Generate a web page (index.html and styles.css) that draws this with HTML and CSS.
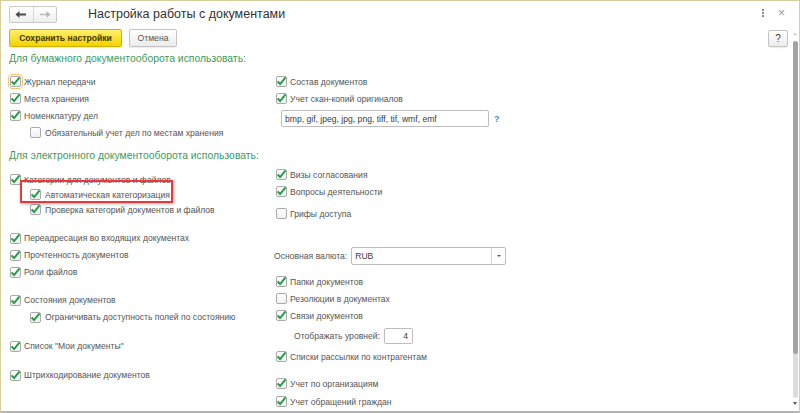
FILE: index.html
```html
<!DOCTYPE html>
<html lang="ru">
<head>
<meta charset="utf-8">
<title>Настройка работы с документами</title>
<link rel="stylesheet" href="styles.css">
</head>
<body>
<div class="window">
  <header class="titlebar">
    <div class="nav">
      <button class="nav-btn back" type="button">
        <svg width="12" height="9" viewBox="0 0 12 9"><path d="M11 4.5H3" stroke="#4a4a4a" stroke-width="2"/><path d="M0.5 4.5L4.5 1V8Z" fill="#4a4a4a"/></svg>
      </button>
      <button class="nav-btn fwd" type="button">
        <svg width="12" height="9" viewBox="0 0 12 9"><path d="M1 4.5H8.5" stroke="#b5b5b5" stroke-width="1.4"/><path d="M11.5 4.5L7.5 1.3V7.7Z" fill="#b5b5b5"/></svg>
      </button>
    </div>
    <h1 class="title">Настройка работы с документами</h1>
    <div class="win-icons">
      <span class="more"><i></i><i></i><i></i></span>
      <span class="close">×</span>
    </div>
  </header>
  <div class="body">
    <div class="main">
      <div class="toolbar">
        <button class="btn btn-primary" type="button">Сохранить настройки</button>
        <button class="btn" type="button">Отмена</button>
        <button class="btn btn-help" type="button">?</button>
      </div>
      <div class="content">
        <h2 class="section-title">Для бумажного документооборота использовать:</h2>
        <div class="cols">
          <div class="col">
            <label class="row mt-7"><span class="cb on focus"></span>Журнал передачи</label>
            <label class="row"><span class="cb on"></span>Места хранения</label>
            <label class="row"><span class="cb on"></span>Номенклатуру дел</label>
            <label class="row sub"><span class="cb"></span>Обязательный учет дел по местам хранения</label>
          </div>
          <div class="col">
            <label class="row mt-7"><span class="cb on"></span>Состав документов</label>
            <label class="row"><span class="cb on"></span>Учет скан-копий оригиналов</label>
            <div class="field-row mt-3">
              <div class="text-input wide">bmp, gif, jpeg, jpg, png, tiff, tif, wmf, emf</div>
              <span class="hint">?</span>
            </div>
          </div>
        </div>

        <h2 class="section-title mt-8">Для электронного документооборота использовать:</h2>
        <div class="cols">
          <div class="col">
            <div class="group mt-9">
              <label class="row short"><span class="cb on"></span>Категории для документов и файлов</label>
              <label class="row short sub"><span class="cb on"></span>Автоматическая категоризация</label>
              <label class="row short sub"><span class="cb on"></span>Проверка категорий документов и файлов</label>
              <div class="annotation"></div>
            </div>
            <label class="row mt-13"><span class="cb on"></span>Переадресация во входящих документах</label>
            <label class="row"><span class="cb on"></span>Прочтенность документов</label>
            <label class="row"><span class="cb on"></span>Роли файлов</label>
            <label class="row mt-11"><span class="cb on"></span>Состояния документов</label>
            <label class="row sub"><span class="cb on"></span>Ограничивать доступность полей по состоянию</label>
            <label class="row mt-12"><span class="cb on"></span>Список "Мои документы"</label>
            <label class="row mt-12"><span class="cb on"></span>Штрихкодирование документов</label>
          </div>
          <div class="col">
            <label class="row mt-3"><span class="cb on"></span>Визы согласования</label>
            <label class="row"><span class="cb on"></span>Вопросы деятельности</label>
            <label class="row mt-5"><span class="cb"></span>Грифы доступа</label>
            <div class="field-row currency mt-25">
              <span class="field-label">Основная валюта:</span>
              <div class="select"><span class="select-value">RUB</span><span class="select-btn"></span></div>
            </div>
            <label class="row mt-8"><span class="cb on"></span>Папки документов</label>
            <label class="row"><span class="cb"></span>Резолюции в документах</label>
            <label class="row"><span class="cb on"></span>Связи документов</label>
            <div class="field-row levels mt-4">
              <span class="field-label">Отображать уровней:</span>
              <div class="text-input num">4</div>
            </div>
            <label class="row mt-4"><span class="cb on"></span>Списки рассылки по контрагентам</label>
            <label class="row mt-10"><span class="cb on"></span>Учет по организациям</label>
            <label class="row mt-1"><span class="cb on"></span>Учет обращений граждан</label>
          </div>
        </div>
      </div>
    </div>
    <div class="scrollbar">
      <span class="sb-up"></span>
      <div class="sb-track"><div class="sb-thumb"></div></div>
      <span class="sb-down"></span>
    </div>
  </div>
</div>
</body>
</html>
```

FILE: styles.css
```css
* { box-sizing: border-box; }
html, body { margin: 0; padding: 0; background: #fff; }
body {
  font-family: "Liberation Sans", Arial, sans-serif;
  font-size: 8.6px;
  color: #555555;
}
.window {
  width: 800px;
  height: 413px;
  border: 1px solid #d8cf9e;
  border-bottom: 2px solid #b4b4b4;
  display: flex;
  flex-direction: column;
  overflow: hidden;
  background: #fff;
}
/* title bar */
.titlebar {
  display: flex;
  align-items: center;
  height: 27px;
  padding: 5px 0 5px 8px;
  flex: none;
}
.nav {
  display: flex;
  width: 48px;
  height: 17px;
  border: 1px solid #c9c9c9;
  border-radius: 2px;
  background: linear-gradient(#ffffff, #efefef);
}
.nav-btn {
  flex: 1;
  border: 0;
  background: transparent;
  padding: 0;
  display: flex;
  align-items: center;
  justify-content: center;
}
.nav-btn.back { border-right: 1px solid #d6d6d6; }
.title {
  margin: 0 0 0 31px;
  font-size: 12.5px;
  font-weight: normal;
  color: #333;
  line-height: 17px;
  flex: 1;
}
.win-icons {
  display: flex;
  align-items: center;
  gap: 14px;
  margin-right: 14px;
  margin-top: -3px;
}
.more {
  display: flex;
  flex-direction: column;
  gap: 1px;
  width: 2px;
}
.more i { display: block; width: 2px; height: 2px; background: #8a8a8a; }
.close { font-size: 12px; color: #9a9a9a; line-height: 12px; }

/* body */
.body {
  flex: 1;
  display: flex;
  min-height: 0;
}
.main {
  flex: 1;
  display: flex;
  flex-direction: column;
  min-width: 0;
}
.toolbar {
  display: flex;
  align-items: center;
  gap: 7px;
  padding: 1px 3px 0 8px;
  height: 19px;
  flex: none;
}
.btn {
  height: 18px;
  border: 1px solid #c4c4c4;
  border-radius: 2px;
  background: linear-gradient(#ffffff, #ececec);
  font-family: inherit;
  font-size: 8.6px;
  color: #555;
  padding: 0 9px;
  box-shadow: 0 1px 1px rgba(0,0,0,0.08);
}
.btn-primary {
  width: 113px;
  font-weight: bold;
  color: #3d3600;
  background: linear-gradient(#fff06a, #f4d200);
  border-color: #d4b000;
}
.btn-primary + .btn { width: 48px; padding: 0; }
.btn-help {
  margin-left: auto;
  width: 20px;
  height: 17px;
  padding: 0;
  font-size: 10px;
  color: #333;
}

.content {
  flex: 1;
  overflow: hidden;
  padding-left: 9px;
}
.section-title {
  margin: 5px 0 0 -1px;
  font-size: 10.4px;
  font-weight: normal;
  line-height: 14px;
  height: 14px;
  color: #3d9a5c;
}
.section-title.mt-8 { margin-top: 8px; }
.cols {
  display: grid;
  grid-template-columns: 266px 1fr;
  align-items: start;
}
.col { display: flex; flex-direction: column; }
.row {
  display: flex;
  align-items: center;
  gap: 2px;
  height: 17px;
  white-space: nowrap;
}
.row.short { height: 15px; }
.row.sub { padding-left: 20px; gap: 3px; }
.cb {
  width: 11px;
  height: 11px;
  flex: none;
  border: 1px solid #aaaaaa;
  border-radius: 2px;
  background: linear-gradient(#ffffff, #f1f1f1);
  margin-right: 1px;
}
.cb.on {
  background-image: url("data:image/svg+xml,%3Csvg xmlns='http://www.w3.org/2000/svg' width='11' height='11' viewBox='0 0 11 11'%3E%3Cpath d='M1.6 5.4 L4.1 8.1 L9.6 1.4' stroke='%23229a47' stroke-width='2' fill='none'/%3E%3C/svg%3E"), linear-gradient(#ffffff, #f1f1f1);
  background-position: -1px -1px, 0 0;
  background-repeat: no-repeat;
}
.cb.focus { outline: 1px solid #f2c46c; outline-offset: 1px; }

.group { position: relative; display: flex; flex-direction: column; }
.annotation {
  position: absolute;
  left: 10px;
  top: 8px;
  width: 153px;
  height: 23px;
  border: 2px solid #e8383d;
  box-shadow: 1px 1px 3px rgba(0,0,0,0.3);
  pointer-events: none;
}

.field-row { display: flex; align-items: center; }
.text-input {
  height: 17px;
  border: 1px solid #bdbdbd;
  border-radius: 2px;
  background: #fff;
  display: flex;
  align-items: center;
  padding: 0 3px;
  color: #3a3a3a;
  font-size: 8.6px;
  white-space: nowrap;
}
.text-input.wide { width: 208px; margin-left: 5px; }
.hint {
  margin-left: 5px;
  color: #3a8fd2;
  font-weight: bold;
  font-size: 9px;
}
.field-label { white-space: nowrap; }
.currency { height: 18px; margin-left: -2px; }
.currency .field-label { margin-right: 4px; }
.select {
  width: 155px;
  height: 18px;
  border: 1px solid #bdbdbd;
  border-radius: 2px;
  display: flex;
  align-items: center;
}
.select-value { flex: 1; padding-left: 3px; color: #3a3a3a; }
.select-btn {
  width: 14px;
  height: 100%;
  border-left: 1px solid #d4d4d4;
  position: relative;
}
.select-btn::after {
  content: "";
  position: absolute;
  left: 5px;
  top: 7px;
  border-left: 2px solid transparent;
  border-right: 2px solid transparent;
  border-top: 2px solid #555;
}
.levels { height: 16px; padding-left: 18px; }
.levels .field-label { margin-right: 4px; }
.text-input.num {
  width: 29px;
  height: 16px;
  justify-content: flex-end;
  padding-right: 4px;
}

/* spacing helpers */
.mt-1 { margin-top: 1px; }
.mt-2 { margin-top: 2px; }
.mt-3 { margin-top: 3px; }
.mt-4 { margin-top: 4px; }
.mt-5 { margin-top: 5px; }
.mt-7 { margin-top: 7px; }
.mt-8 { margin-top: 8px; }
.mt-9 { margin-top: 9px; }
.mt-10 { margin-top: 10px; }
.mt-11 { margin-top: 11px; }
.mt-12 { margin-top: 12px; }
.mt-13 { margin-top: 12.5px; }
.mt-25 { margin-top: 25px; }

/* scrollbar */
.scrollbar {
  width: 8px;
  flex: none;
  display: flex;
  flex-direction: column;
  align-items: center;
  padding-top: 5px;
}
.sb-up, .sb-down {
  width: 0;
  height: 0;
  border-left: 2px solid transparent;
  border-right: 2px solid transparent;
}
.sb-up { border-bottom: 2px solid #c2c2c2; }
.sb-down { border-top: 3px solid #5a5a5a; margin-top: 4px; }
.sb-track {
  margin-top: 6px;
  width: 5px;
  height: 357px;
  border-radius: 3px;
  background: #dcdcdc;
}
.sb-thumb {
  height: 313px;
  border-radius: 3px;
  background: #a3a3a3;
}
```
